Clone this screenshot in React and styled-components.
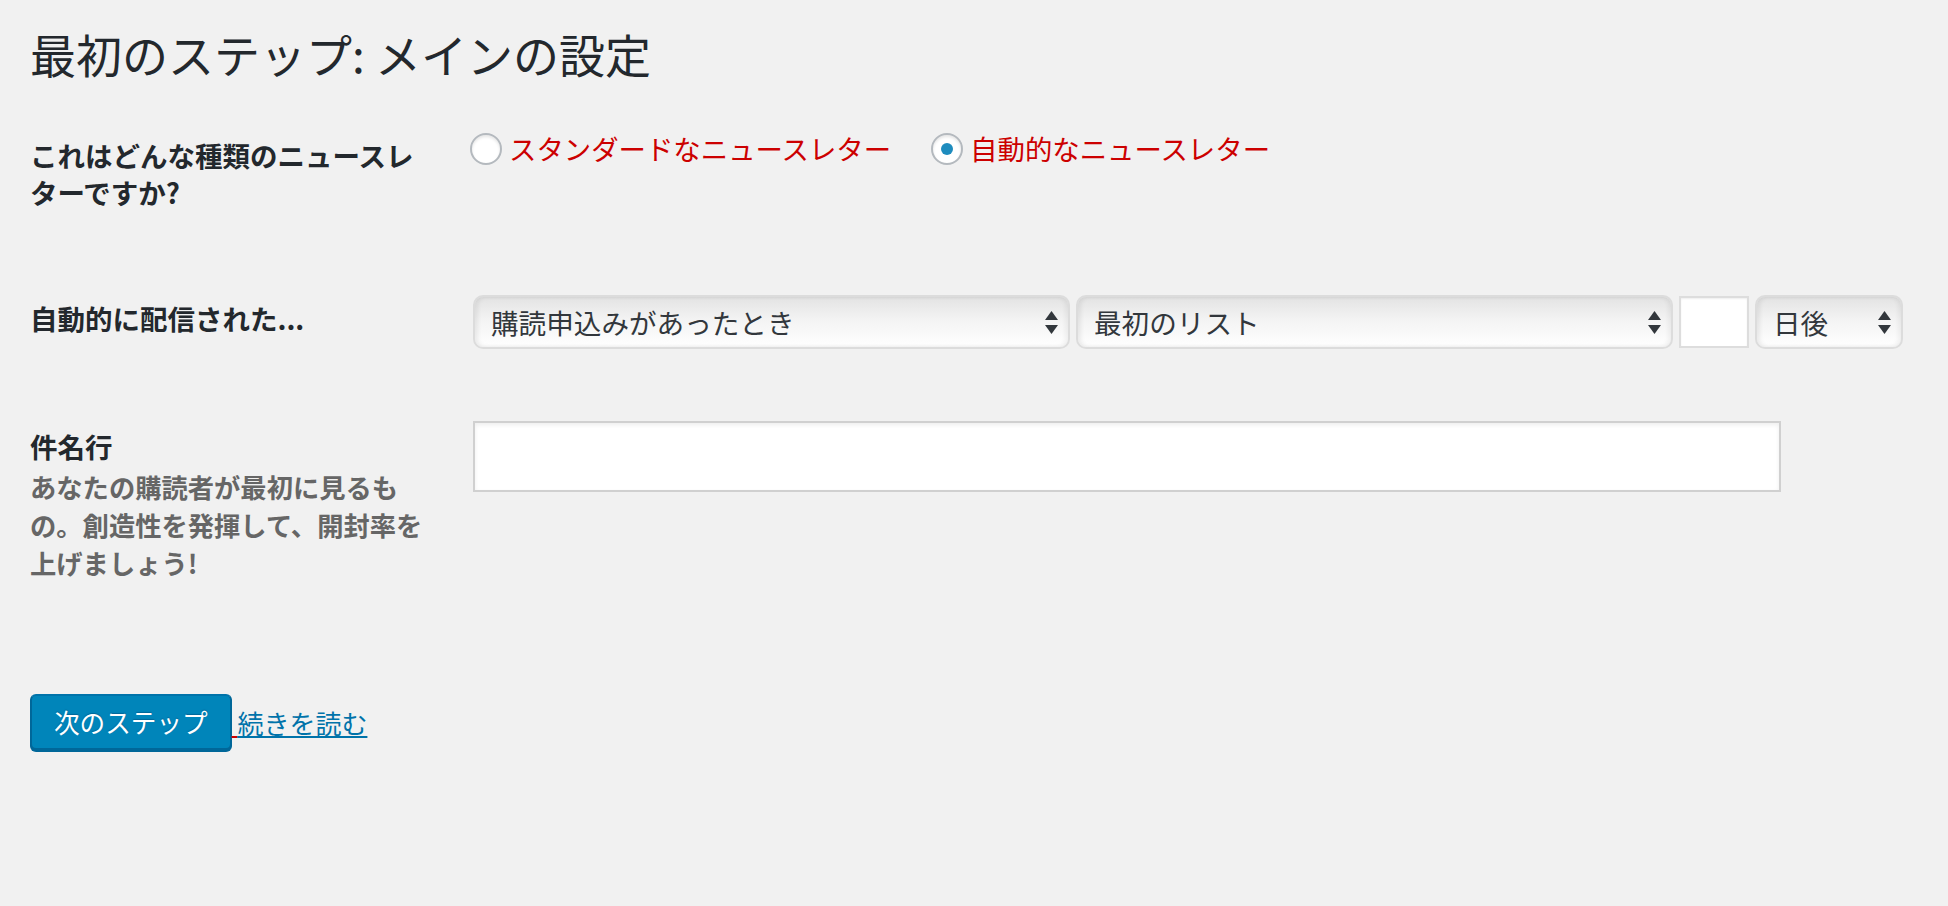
import React from 'react';
import styled, { createGlobalStyle } from 'styled-components';

const GlobalStyle = createGlobalStyle`
  html, body {
    margin: 0;
    padding: 0;
    background: #f1f1f1;
  }
  body {
    min-height: 100vh;
    font-family: "Noto Sans CJK JP", "Noto Sans", sans-serif;
    color: #23282d;
  }
`;

const Page = styled.div`
  padding: 24px 30px 0;
`;

const Title = styled.h1`
  margin: 0;
  font-size: 46px;
  line-height: 59px;
  font-weight: 400;
  color: #23282d;
`;

const Row = styled.div`
  display: grid;
  grid-template-columns: 443px 1fr;
  align-items: start;
  margin-top: ${({ $top }) => $top}px;
`;

const Th = styled.div`
  max-width: 396px;
  padding-top: ${({ $offset }) => $offset}px;
  font-size: 27.5px;
  line-height: 37px;
  font-weight: 700;
  color: #23282d;
`;

const Description = styled.p`
  margin: 3px 0 0;
  font-size: 26.3px;
  line-height: 38px;
  font-weight: 700;
  color: #666;
`;

const RadioGroup = styled.div`
  display: flex;
  align-items: center;
  gap: 40px;
  margin-left: -3px;
`;

const RadioLabel = styled.label`
  display: flex;
  align-items: center;
  gap: 7px;
  font-size: 27.4px;
  line-height: 37px;
  color: #c00;
`;

const Radio = styled.span`
  position: relative;
  box-sizing: border-box;
  width: 32px;
  height: 32px;
  border: 2px solid #b4b9be;
  border-radius: 50%;
  background: #fff;
  box-shadow: inset 0 2px 3px rgba(0, 0, 0, 0.1);

  &::after {
    content: '';
    display: ${({ $checked }) => ($checked ? 'block' : 'none')};
    position: absolute;
    top: 8px;
    left: 8px;
    width: 12px;
    height: 12px;
    border-radius: 50%;
    background: #1e8cbe;
  }
`;

const Controls = styled.div`
  display: flex;
  align-items: center;
  gap: 6px;
`;

const Select = styled.div`
  box-sizing: border-box;
  display: flex;
  align-items: center;
  justify-content: space-between;
  width: ${({ $width }) => $width}px;
  height: 54px;
  padding: 0 10px 0 16px;
  border: 2px solid #dcdcdc;
  border-radius: 10px;
  background: linear-gradient(to bottom, #e3e3e3 0%, #f3f3f3 45%, #fff 100%);
  box-shadow: inset 3px 0 4px rgba(0, 0, 0, 0.07),
    inset -3px 0 4px rgba(0, 0, 0, 0.05);
  font-size: 27.6px;
  line-height: 50px;
  color: #32373c;
`;

const Arrows = styled.svg`
  flex: none;
  width: 13px;
  height: 23px;
  fill: #32373c;
`;

const NumberBox = styled.div`
  box-sizing: border-box;
  width: 70px;
  height: 52px;
  border: 2px solid #dddddd;
  background: #fff;
  box-shadow: inset 0 1px 2px rgba(0, 0, 0, 0.07);
`;

const TextInput = styled.div`
  box-sizing: border-box;
  width: 1308px;
  height: 71px;
  border: 2px solid #d0d0d0;
  background: #fff;
  box-shadow: inset 0 2px 4px rgba(0, 0, 0, 0.07);
`;

const Footer = styled.div`
  display: flex;
  align-items: center;
  margin-top: 112px;
`;

const PrimaryButton = styled.button`
  box-sizing: border-box;
  height: 56px;
  padding: 0 22px;
  border: 2px solid;
  border-color: #0073aa #006799 #006799;
  border-radius: 6px;
  background: #0085ba;
  box-shadow: 0 2px 0 #006799;
  color: #fff;
  font-family: inherit;
  font-size: 25.6px;
  line-height: 50px;
  text-shadow: 0 -1px 1px #006799;
`;

const MoreLink = styled.a`
  font-size: 26px;
  line-height: 37px;
  color: #0073aa;
  text-decoration: underline;
  cursor: pointer;
`;

const RedGap = styled.span`
  text-decoration: underline;
  text-decoration-color: #c00;
`;

function SelectBox({ width, children }) {
  return (
    <Select $width={width}>
      <span>{children}</span>
      <Arrows viewBox="0 0 13 23">
        <polygon points="0,9 6.5,0 13,9" />
        <polygon points="0,14 13,14 6.5,23" />
      </Arrows>
    </Select>
  );
}

export default function App() {
  return (
    <>
      <GlobalStyle />
      <Page>
        <Title>最初のステップ: メインの設定</Title>

        <Row $top={47}>
          <Th $offset={7}>これはどんな種類のニュースレターですか?</Th>
          <RadioGroup>
            <RadioLabel>
              <Radio />
              スタンダードなニュースレター
            </RadioLabel>
            <RadioLabel>
              <Radio $checked />
              自動的なニュースレター
            </RadioLabel>
          </RadioGroup>
        </Row>

        <Row $top={84}>
          <Th $offset={5}>自動的に配信された...</Th>
          <Controls>
            <SelectBox width={597}>購読申込みがあったとき</SelectBox>
            <SelectBox width={597}>最初のリスト</SelectBox>
            <NumberBox />
            <SelectBox width={148}>日後</SelectBox>
          </Controls>
        </Row>

        <Row $top={72}>
          <Th $offset={7}>
            件名行
            <Description>
              あなたの購読者が最初に見るもの。創造性を発揮して、開封率を上げましょう!
            </Description>
          </Th>
          <TextInput />
        </Row>

        <Footer>
          <PrimaryButton>次のステップ</PrimaryButton>
          <MoreLink>
            <RedGap>&nbsp;</RedGap>続きを読む
          </MoreLink>
        </Footer>
      </Page>
    </>
  );
}
